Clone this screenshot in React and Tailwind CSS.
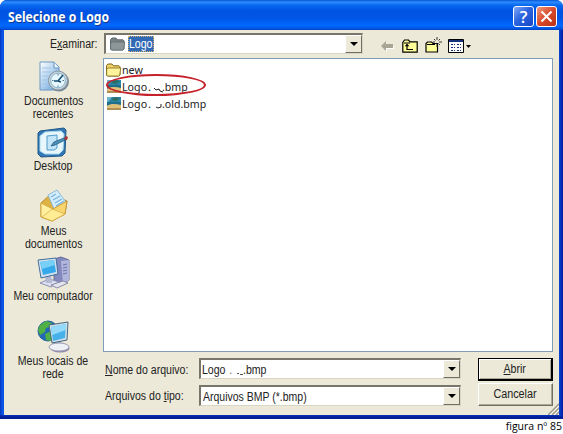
import React from "react";

function T({ children, origin = "origin-left", scale = "scale-x-[0.88]", className = "" }) {
  return <span className={`inline-block whitespace-pre ${scale} ${origin} ${className}`}>{children}</span>;
}

function Folder({ gray }) {
  return (
    <svg width="17" height="14" viewBox="0 0 17 14" className="block shrink-0">
      <path d="M1.5 12V2.5L3 1h4l1.5 1.8h5.5l1 1V12l-1.3 1H2.5z" fill={gray ? "#788184" : "#efd36a"} stroke={gray ? "#616b70" : "#80691b"} />
      <path d="M3.5 5h12.2l-1 7.3-1 .7H2.5l-.8-.8V6z" fill={gray ? "#8d979a" : "#fff49b"} stroke={gray ? "#646e72" : "#80691b"} strokeWidth=".8" />
    </svg>
  );
}

function Bitmap() {
  return (
    <svg width="14" height="13" viewBox="0 0 14 13" className="block shrink-0">
      <path fill="#2a86a8" d="M0 0h14v13H0z" />
      <path fill="#6fb3cc" d="M0 0h5L2 4 0 6z" />
      <path fill="#2b6d5e" d="M6 1l4-1 3 2-4 1 1 2-4-2-2 1z" />
      <path fill="#1f6f8c" d="M0 5h14v3H0z" />
      <path fill="#e0c078" d="M0 9c4-3 9-2 14-1v3H0z" />
      <path fill="#b08f52" d="M0 11h14v2H0z" />
    </svg>
  );
}

function RecentIcon() {
  return (
    <svg width="32" height="32" viewBox="0 0 32 32">
      <defs><linearGradient id="page" x2="1" y2="1"><stop stopColor="#fff" /><stop offset="1" stopColor="#5f9fdd" /></linearGradient></defs>
      <path d="M2 1h14l5 5v23H2z" fill="url(#page)" stroke="#6c98c3" />
      <path d="M16 1v6h5" fill="#edf7ff" stroke="#6693c1" />
      <path d="M4 7h9M4 11h9M4 15h6M4 19h5M4 23h6" stroke="#a0c5e7" />
      <circle cx="21" cy="20.5" r="10" fill="#748694" />
      <circle cx="20" cy="19.5" r="9.5" fill="#c8d2d9" stroke="#8797a3" />
      <circle cx="20" cy="19.5" r="7.3" fill="#e6f7ff" stroke="#8ab5cc" />
      <path d="M20 13v1.5M26 19.5h-1.500M20 26v-1.500M14 19.500h1.500" stroke="#547489" />
      <path d="M25 14l-5 6h-4M20 20l3 1" stroke="#164f75" strokeWidth="1.6" fill="none" />
    </svg>
  );
}

function DesktopIcon() {
  return (
    <svg width="33" height="31" viewBox="0 0 33 31">
      <path d="M3 4l24-3 2 2-1 23-3 3-21 1-3-3L1 6z" fill="#3277b6" stroke="#215988" />
      <path d="M8 5l16-1 3 3-1 16-4 4H8l-5-3V9z" fill="#e8f7fc" stroke="#a8d9ed" />
      <path d="M10 9l10-1v13l-3 2h-7z" fill="#c2e6f8" stroke="#529bc9" />
      <path d="M17 15l10-4 1 2-10 5-4 1z" fill="#4f92b8" stroke="#1d5881" strokeWidth=".8" />
      <path d="M27 11l2-2 2 1-1 3-2 0z" fill="#a4393d" />
    </svg>
  );
}

function DocumentsIcon() {
  return (
    <svg width="30" height="33" viewBox="0 0 30 33">
      <path d="M2 14L12 5l16 7-2 13-13 7-11-4z" fill="#dfb343" stroke="#b58a2b" />
      <path d="M9 6l9-5 9 12-11 9z" fill="#d5edfb" stroke="#8eb9d5" />
      <path d="M12 8l5-3M14 11l7-4M16 14l7-4M17 17l8-5" stroke="#78b4dc" strokeWidth="1.3" />
      <path d="M2 14l12 6-1 12-11-4z" fill="#fff0a0" stroke="#d3a943" />
      <path d="M14 20l14-8-2 13-13 7z" fill="#f7d66d" stroke="#ca9c38" />
      <path d="M3 28l10-8 13 5-13 7z" fill="#ffec94" stroke="#d5aa42" strokeWidth=".7" />
    </svg>
  );
}

function ComputerIcon() {
  return (
    <svg width="34" height="33" viewBox="0 0 34 33">
      <path d="M17 3l7-2 8 3v20l-6 4-9-4z" fill="#8388bd" stroke="#686e9d" />
      <path d="M24 5l8-1v20l-6 4z" fill="#b0b5dc" />
      <path d="M26 9l4-1M26 12l4-1M26 15l4-1M26 18l4-1" stroke="#6d75a9" />
      <path d="M3 27l9-4 10 3-8 5z" fill="#dce0ef" stroke="#8a91b7" />
      <path d="M8 19h6l1 8H9z" fill="#b3b8d3" />
      <path d="M1 4l18-2 2 16-17 4z" fill="#d3e1ef" stroke="#426e9b" />
      <path d="M3 6l14-2 2 12-13 3z" fill="#35a9e9" />
      <path d="M3 6l14-2 1 5-13 4z" fill="#78d0f6" />
      <path d="M14 29l12-4 5 2-11 5z" fill="#e3e4ee" stroke="#8b8ca8" />
    </svg>
  );
}

function NetworkIcon() {
  return (
    <svg width="33" height="34" viewBox="0 0 33 34">
      <circle cx="11" cy="11" r="10" fill="#2268b8" stroke="#28639c" />
      <path d="M3 5l6-4 6 2-2 4-4 1-1 4-5 3-2-5zM8 14l6-3 4 3-4 7-5-1z" fill="#4fb045" />
      <path d="M16 20h8l1 8h-8z" fill="#a5b4c9" />
      <ellipse cx="23" cy="28.500" rx="9.500" ry="4" fill="#8f88a8" />
      <ellipse cx="22" cy="27" rx="10" ry="4" fill="#edf1f6" stroke="#a09cb8" />
      <path d="M12 5l19-3-1 18-15 3z" fill="#cedfe9" stroke="#47657c" />
      <path d="M14 7l15-3-1 14-12 3z" fill="#46b1e9" />
      <path d="M14 7l15-3v6l-14 5z" fill="#93dafa" />
    </svg>
  );
}

function Place({ icon, lines, height, iconHeight }) {
  return (
    <div className={`flex flex-col items-center ${height}`}>
      <div className={`flex shrink-0 items-start ${iconHeight}`}>{icon}</div>
      {lines.map((line) => <T key={line} origin="origin-center" className="h-[13px] leading-[13px]">{line}</T>)}
    </div>
  );
}

function Arrow() {
  return (
    <div className="flex w-[17px] items-center justify-center border border-t-white border-l-white border-r-[#716f64] border-b-[#716f64] bg-[#ece9d8]">
      <svg width="8" height="4" viewBox="0 0 8 4"><path d="M0 0h8L4 4z" /></svg>
    </div>
  );
}

function Field({ children, className }) {
  return (
    <div className={`flex border-t-2 border-l-2 border-r border-b border-t-[#78756a] border-l-[#78756a] border-r-[#d9d5c5] border-b-[#d9d5c5] bg-white ${className}`}>
      <div className="flex min-w-0 flex-1 items-center">{children}</div>
      <Arrow />
    </div>
  );
}

function Tools() {
  return (
    <div className="flex items-center pt-1">
      <svg width="13" height="12" viewBox="0 0 13 12" className="ml-[18px]"><path d="M1 7l5-4v3h7v3H6v3z" fill="#fff" /><path d="M0 6l5-5v3h7v4H5v3z" fill="#a7a596" /></svg>
      <svg width="16" height="14" viewBox="0 0 16 14" className="ml-[8px]">
        <path d="M.8 13.2V3.500L2.500 1h4l1.500 1.800h7.200v10.400z" fill="#ffff99" stroke="#000" strokeWidth="1.2" /><path d="M2 4h6" stroke="#000" />
        <path d="M5 6v4.500h6" stroke="#000" fill="none" strokeWidth="1.2" /><path d="M2.800 7.200L5 4.500l2.300 2.700z" />
      </svg>
      <svg width="17" height="16" viewBox="0 0 17 16" className="mb-0.5 ml-[7px]">
        <path d="M1 15V6.500L2.500 5h4L8 6.500h4.500V15z" fill="#ffff99" stroke="#000" strokeWidth="1.2" /><path d="M2 7.500h8" stroke="#000" />
        <path d="M12 0v3M12 7v3M8 5h2M14 5h3M9 2l1.500 1.500M15 2l-1.500 1.500M15 8l-1.500-1.500M10 7l1-1" stroke="#222" strokeWidth=".9" />
      </svg>
      <svg width="24" height="15" viewBox="0 0 24 15" className="ml-[6px]">
        <path d="M.5.5h15v13H.5z" fill="#fff" stroke="#000" /><path d="M1 1h14v2H1z" fill="#16327c" />
        <path d="M3 5.500h2m1 0h1m2 0h2m1 0h1M3 8.500h2m1 0h1m2 0h2m1 0h1M3 11.500h2m1 0h1m2 0h2m1 0h1" stroke="#16327c" />
        <path d="M18 6h5l-2.500 3z" />
      </svg>
    </div>
  );
}

function FileText({ mark, end }) {
  return (
    <div className="ml-px flex items-center font-['Noto_Sans'] text-[11.5px] leading-[17px]">
      <span className="w-[26px]"><T scale="scale-x-[0.93]">Logo</T></span><span className="w-[6px]">.</span>
      <svg width="9" height="9" viewBox="0 0 9 9" className="mt-[4px]"><path d={mark} fill="none" stroke="#222" /></svg>
      <T scale="scale-x-[0.92]" className="-ml-px">{end}</T>
    </div>
  );
}

export default function App() {
  return (
    <div className="h-[434px] w-[563px] overflow-hidden bg-white font-['Liberation_Sans',sans-serif] text-[12px] text-[#222]">
      <div className="flex h-[419px] flex-col rounded-t-[7px] bg-[linear-gradient(180deg,transparent_415px,#0a35c0_415px,#001e96_417px),linear-gradient(90deg,#0733bb,#0855e8_2px,#0b55df_4px,#0b55df_558px,#0a3cc8_560px,#001e9c)]">
        <header className="flex h-[30px] shrink-0 items-center rounded-t-[7px] bg-[linear-gradient(180deg,#0755d5_0%,#2c8cff_7%,#0767ef_18%,#0054e3_35%,#0055e5_60%,#0368ff_85%,#0054df_96%,#003dbd)] pr-[6px] pl-2">
          <T scale="scale-x-[0.9]" className="pt-1 font-['Noto_Sans',sans-serif] text-[13.5px] font-bold text-white [text-shadow:1px_1px_#123a91]">Selecione o Logo</T>
          <div className="ml-auto flex gap-[2px] pt-[3px]">
            <div className="flex h-[21px] w-[21px] items-center justify-center rounded-[3px] border border-white bg-[linear-gradient(135deg,#80a9f6,#2c64df_45%,#1847c6)] font-['Open_Sans'] text-[17px] font-semibold text-white">?</div>
            <div className="flex h-[21px] w-[21px] items-center justify-center rounded-[3px] border border-white bg-[linear-gradient(135deg,#ee9a80,#d9492a_50%,#b83217)]">
              <svg width="13" height="13" viewBox="0 0 13 13"><path d="M1.500 1.500l10 10m0-10l-10 10" stroke="#fff" strokeWidth="2" /></svg>
            </div>
          </div>
        </header>
        <main className="mr-1 mb-1 ml-1 flex h-[385px] flex-col bg-[#ece9d8]">
          <div className="flex h-[28px] shrink-0">
            <div className="w-[100px] pt-[5px] pl-[46px]"><T>E<u>x</u>aminar:</T></div>
            <Field className="mt-[3px] h-[21px] w-[259px]">
              <div className="ml-[3px]"><Folder gray /></div>
              <div className="ml-[2px] flex h-[16px] w-[26px] items-center border border-dotted border-[#d5b074] bg-[#3169b5] text-white"><T>Logo</T></div>
            </Field>
            <Tools />
          </div>
          <div className="flex min-h-0 flex-1">
            <aside className="flex w-[99px] flex-col pt-[3px]">
              <Place icon={<RecentIcon />} lines={["Documentos", "recentes"]} height="h-[66px]" iconHeight="h-[34px]" />
              <Place icon={<DesktopIcon />} lines={["Desktop"]} height="h-[62px]" iconHeight="h-[33px]" />
              <Place icon={<DocumentsIcon />} lines={["Meus", "documentos"]} height="h-[67px]" iconHeight="h-[36px]" />
              <Place icon={<ComputerIcon />} lines={["Meu computador"]} height="h-[64px]" iconHeight="h-[34px]" />
              <Place icon={<NetworkIcon />} lines={["Meus locais de", "rede"]} height="h-[65px]" iconHeight="h-[35px]" />
            </aside>
            <section className="flex min-w-0 flex-1 flex-col">
              <div className="h-[294px] w-[450px] shrink-0 border border-[#7f9db9] bg-white pt-[2px] pl-[1px]">
                <div className="flex h-[17px] items-center"><Folder /><span className="font-['Noto_Sans'] text-[11.5px] leading-[17px]"><T scale="scale-x-[0.93]">new</T></span></div>
                <div className="relative flex h-[17px] items-center pl-[2px]">
                  <Bitmap /><FileText mark="M0 4l2 2 3-1 1 2 3 1" end=".bmp" />
                  <div className="absolute -top-[4px] left-[1px] h-[22px] w-[100px] rounded-[50%] border-2 border-[#c5222b]" />
                </div>
                <div className="flex h-[17px] items-center pl-[2px]"><Bitmap /><FileText mark="M2 6l2 1 3-1V3" end=".old.bmp" /></div>
              </div>
              <div className="flex flex-1">
                <div className="flex w-[358px] flex-col gap-[6px] pt-[6px]">
                  <div className="flex h-[21px] items-center">
                    <div className="w-[96px] pt-[3px] pl-[2px]"><T><u>N</u>ome do arquivo:</T></div>
                    <Field className="h-[21px] w-[262px]">
                      <div className="ml-px flex pt-[2px]"><span className="w-[27px]"><T>Logo</T></span><span className="w-[7px] text-[#777]">.</span><svg width="8" height="15" viewBox="0 0 8 15"><path d="M1 12.500h2M4 13.500h3" stroke="#555" /></svg><T className="-ml-px">.bmp</T></div>
                    </Field>
                  </div>
                  <div className="flex h-[21px] items-center">
                    <div className="w-[96px] pl-[2px]"><T><span>Arquivos do <u>t</u>ipo:</span></T></div>
                    <Field className="h-[21px] w-[262px]"><T scale="scale-x-[0.875]" className="ml-[2px] pt-[1px]">Arquivos BMP (*.bmp)</T></Field>
                  </div>
                </div>
                <div className="ml-[17px] flex w-[75px] flex-col gap-[2px] pt-[6px]">
                  <button className="h-[23px] border border-r-2 border-b-2 border-black bg-[#ece9d8] leading-[19px] shadow-[inset_1px_1px_white,inset_-1px_-1px_#aca899]"><T origin="origin-center"><u>A</u>brir</T></button>
                  <button className="h-[23px] border border-t-white border-l-white border-r-[#716f64] border-b-[#716f64] bg-[#ece9d8] leading-[19px] shadow-[inset_-1px_-1px_#aca899]"><T origin="origin-center" scale="scale-x-[0.9]">Cancelar</T></button>
                </div>
                <svg width="11" height="12" viewBox="0 0 11 12" className="-ml-[5px] shrink-0 self-end"><path d="M0 12L12 0M4 12l8-8M8 12l4-4" stroke="#9d9a8b" strokeWidth="1.5" /><path d="M2 12L12 2M6 12l6-6M10 12l2-2" stroke="#fff" /></svg>
              </div>
            </section>
          </div>
        </main>
      </div>
      <footer className="pr-px text-right font-['Open_Sans',sans-serif] text-[10.5px] leading-[14px] text-black"><T origin="origin-right" scale="scale-x-100">figura nº 85</T></footer>
    </div>
  );
}
